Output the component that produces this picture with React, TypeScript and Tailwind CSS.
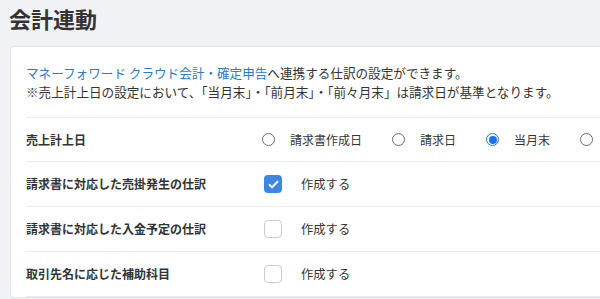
import React, { useState } from 'react';

const font = { fontFamily: '"Noto Sans CJK JP", "Noto Sans", sans-serif' };

function Radio({ checked }: { checked: boolean }) {
  return checked ? (
    <span className="w-[13px] h-[13px] rounded-full border border-[#1a73e8] bg-white flex items-center justify-center shrink-0">
      <span className="w-[8px] h-[8px] rounded-full bg-[#1a73e8]" />
    </span>
  ) : (
    <span className="w-[13px] h-[13px] rounded-full border border-[#6b6b6b] bg-white shrink-0" />
  );
}

function Checkbox({ checked, onClick }: { checked: boolean; onClick: () => void }) {
  return (
    <button
      type="button"
      onClick={onClick}
      className={`w-[18px] h-[18px] rounded-[4px] flex items-center justify-center shrink-0 ${checked ? 'bg-[#3c87e6]' : 'bg-white border border-[#c9cbce]'}`}
    >
      {checked && (
        <svg viewBox="0 0 16 16" className="w-[13px] h-[13px]">
          <path d="M3.2 8.4l3 3 6.6-6.8" fill="none" stroke="white" strokeWidth="2.4" strokeLinecap="round" strokeLinejoin="round" />
        </svg>
      )}
    </button>
  );
}

export default function App() {
  const [base, setBase] = useState('当月末');
  const [checks, setChecks] = useState([true, false, false]);
  const options = ['請求書作成日', '請求日', '当月末', '前月末'];
  const rows = ['請求書に対応した売掛発生の仕訳', '請求書に対応した入金予定の仕訳', '取引先名に応じた補助科目'];

  return (
    <div className="min-h-screen w-[600px] h-[299px] overflow-hidden bg-[#f1f2f6] text-[#333]" style={font}>
      <h1 className="pl-[9px] pt-[3px] text-[22px] font-bold leading-[30px] text-[#333]">会計連動</h1>
      <div className="ml-[10px] mt-[13px] w-[620px] bg-white border border-[#e2e4e8] rounded-[4px] pl-[15px] pt-[16px]">
        <p className="text-[12.6px] leading-[19px]">
          <a className="text-[#2c7bc4]">マネーフォワード クラウド会計・確定申告</a>へ連携する仕訳の設定ができます。
        </p>
        <p className="text-[12.6px] leading-[19px]">※売上計上日の設定において、「当月末」・「前月末」・「前々月末」は請求日が基準となります。</p>
        <div className="mt-[16px] border-t border-[#e8ebef]">
          <div className="flex items-center h-[44px] border-b border-[#e8ebef]">
            <div className="w-[236px] text-[12px] font-bold shrink-0">売上計上日</div>
            <div className="flex items-center">
              {options.map(o => (
                <label key={o} onClick={() => setBase(o)} className="flex items-center mr-[30px] cursor-pointer">
                  <Radio checked={base === o} />
                  <span className="ml-[15px] text-[12px] whitespace-nowrap">{o}</span>
                </label>
              ))}
            </div>
          </div>
          {rows.map((r, i) => (
            <div key={r} className="flex items-center h-[45px] border-b border-[#e8ebef]">
              <div className="w-[238px] text-[12px] font-bold shrink-0">{r}</div>
              <Checkbox checked={checks[i]} onClick={() => setChecks(c => c.map((v, j) => (j === i ? !v : v)))} />
              <span className="ml-[19px] text-[12.3px]">作成する</span>
            </div>
          ))}
        </div>
      </div>
    </div>
  );
}
